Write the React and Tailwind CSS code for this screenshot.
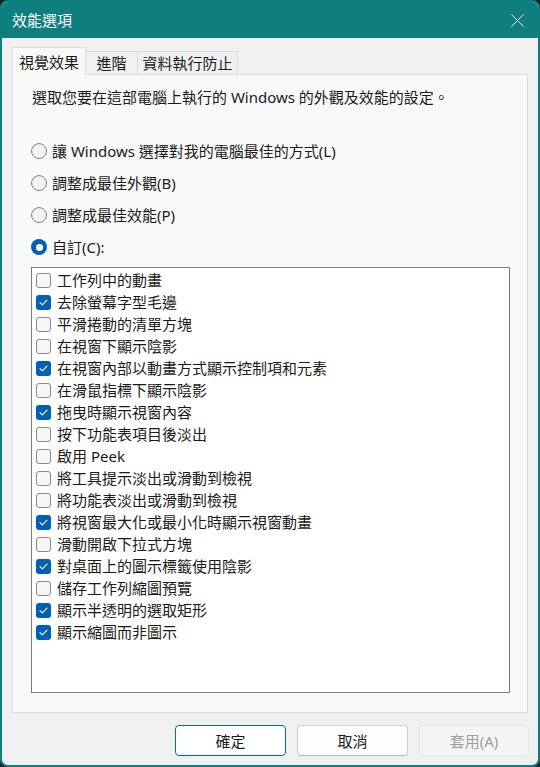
import React from "react";

const items = [
  ["工作列中的動畫", false],
  ["去除螢幕字型毛邊", true],
  ["平滑捲動的清單方塊", false],
  ["在視窗下顯示陰影", false],
  ["在視窗內部以動畫方式顯示控制項和元素", true],
  ["在滑鼠指標下顯示陰影", false],
  ["拖曳時顯示視窗內容", true],
  ["按下功能表項目後淡出", false],
  ["啟用 Peek", false],
  ["將工具提示淡出或滑動到檢視", false],
  ["將功能表淡出或滑動到檢視", false],
  ["將視窗最大化或最小化時顯示視窗動畫", true],
  ["滑動開啟下拉式方塊", false],
  ["對桌面上的圖示標籤使用陰影", true],
  ["儲存工作列縮圖預覽", false],
  ["顯示半透明的選取矩形", true],
  ["顯示縮圖而非圖示", true],
];

const radios = [
  ["讓 Windows 選擇對我的電腦最佳的方式(L)", false],
  ["調整成最佳外觀(B)", false],
  ["調整成最佳效能(P)", false],
  ["自訂(C):", true],
];

function Radio({ checked }) {
  if (checked) {
    return (
      <span className="w-[16px] h-[16px] rounded-full bg-[#005fb8] flex items-center justify-center shrink-0">
        <span className="w-[7px] h-[7px] rounded-full bg-white" />
      </span>
    );
  }
  return <span className="w-[16px] h-[16px] rounded-full border border-[#8a8a8a] bg-[#f3f3f3] shrink-0" />;
}

function Check({ checked }) {
  if (checked) {
    return (
      <span className="w-[15px] h-[15px] rounded-[3px] bg-[#005fb8] flex items-center justify-center shrink-0">
        <svg width="9" height="7" viewBox="0 0 9 7" fill="none">
          <path d="M1 3.6 L3.3 5.8 L8 1.2" stroke="white" strokeWidth="1.1" strokeLinecap="round" strokeLinejoin="round" />
        </svg>
      </span>
    );
  }
  return <span className="w-[15px] h-[15px] rounded-[3px] border border-[#8a8a8a] bg-[#f6f6f6] shrink-0" />;
}

export default function App() {
  return (
    <div
      className="w-[540px] h-[767px] bg-[#1b2424] text-[15px] text-[#1a1a1a]"
      style={{ fontFamily: '"Noto Sans", "Noto Sans CJK TC", sans-serif' }}
    >
      <div className="w-full h-full rounded-[8px] border-2 border-[#0f7e7f] bg-[#f0f0f0] flex flex-col overflow-hidden">
        <div className="h-[36px] bg-[#0f7e7f] flex items-center justify-between pl-[10px] pr-[14px] shrink-0">
          <span className="text-white text-[15px] leading-[20px]">效能選項</span>
          <svg width="13" height="13" viewBox="0 0 13 13">
            <path d="M0.5 0.5 L12.5 12.5 M12.5 0.5 L0.5 12.5" stroke="white" strokeWidth="1" />
          </svg>
        </div>
        <div className="flex flex-col px-[10px] pt-[9px]">
          <div className="flex items-end h-[27px]">
            <div className="relative z-10 w-[74px] h-[28px] -mb-px bg-[#f9f9f9] border border-b-0 border-[#dcdcdc] flex items-center justify-center leading-[20px]">
              視覺效果
            </div>
            <div className="w-[52px] h-[23px] bg-[#f0f0f0] border border-l-0 border-b-0 border-[#dcdcdc] flex items-center justify-center leading-[20px]">
              進階
            </div>
            <div className="w-[100px] h-[23px] bg-[#f0f0f0] border border-l-0 border-b-0 border-[#dcdcdc] flex items-center justify-center leading-[20px]">
              資料執行防止
            </div>
          </div>
          <div className="h-[639px] bg-[#f9f9f9] border border-[#dcdcdc] flex flex-col pl-[18px] pr-[17px] pt-[12px]">
            <div className="leading-[20px] pl-[1px]">選取您要在這部電腦上執行的 Windows 的外觀及效能的設定。</div>
            <div className="mt-[28px] flex flex-col">
              {radios.map(([label, c]) => (
                <div key={label} className="h-[32px] flex items-center gap-[5px]">
                  <Radio checked={c} />
                  <span className="leading-[20px]">{label}</span>
                </div>
              ))}
            </div>
            <div className="mt-[4px] w-[479px] h-[426px] bg-white border border-[#7a7a7a] pt-[1px] pl-[4px] flex flex-col">
              {items.map(([label, c]) => (
                <div key={label} className="h-[22px] flex items-center gap-[6px]">
                  <Check checked={c} />
                  <span className="leading-[20px]">{label}</span>
                </div>
              ))}
            </div>
          </div>
          <div className="mt-[12px] flex justify-end gap-[11px] -mr-[1px]">
            <button className="w-[111px] h-[31px] rounded-[4px] bg-white border border-[#0067c0] text-[15px] leading-[20px] text-[#1a1a1a]">
              確定
            </button>
            <button className="w-[111px] h-[31px] rounded-[4px] bg-[#fdfdfd] border border-[#d0d0d0] border-b-[#b8b8b8] text-[15px] leading-[20px] text-[#1a1a1a]">
              取消
            </button>
            <button className="w-[110px] h-[31px] rounded-[4px] bg-[#f5f5f5] border border-[#e5e5e5] text-[15px] leading-[20px] text-[#9d9d9d]">
              套用(A)
            </button>
          </div>
        </div>
      </div>
    </div>
  );
}
